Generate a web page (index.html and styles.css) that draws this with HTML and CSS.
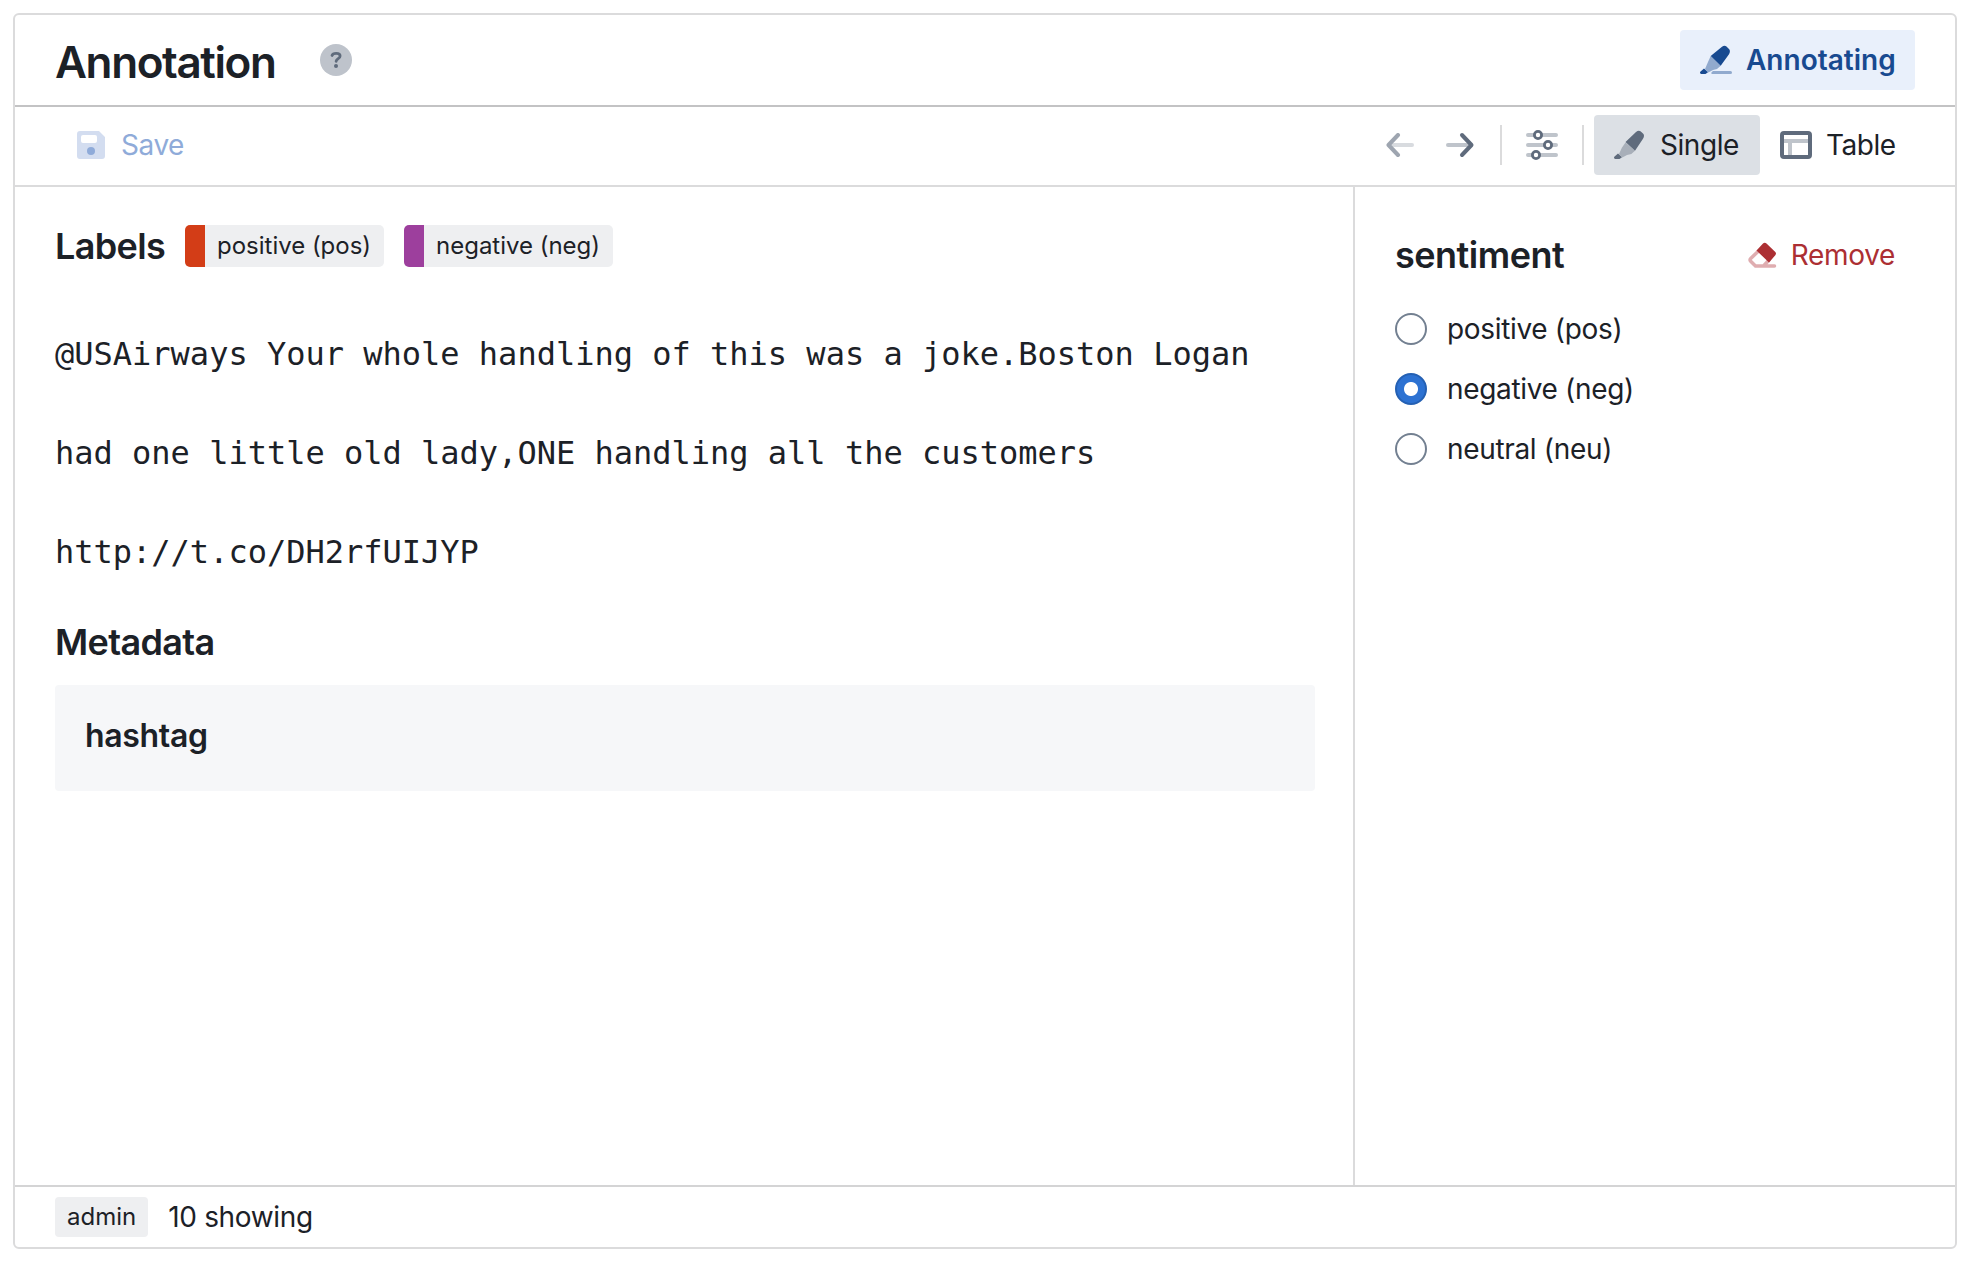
FILE: index.html
```html
<!DOCTYPE html>
<html lang="en">
<head>
<meta charset="utf-8">
<title>Annotation</title>
<link rel="stylesheet" href="styles.css">
</head>
<body>
<main class="widget">
  <header class="header">
    <h1 class="title">Annotation</h1>
    <span class="help"><svg viewBox="0 0 32 32" width="32" height="32"><circle cx="16" cy="16" r="16" fill="#bec3cb"/><path d="M12 11.500C12.500 9.800 14 9.300 16.200 9.300c2.500 0 3.900 1 3.900 2.800 0 2.500-3.600 2.600-4 5.200" fill="none" stroke="#5f6b7c" stroke-width="2.800" stroke-linecap="round"/><circle cx="16" cy="22" r="2" fill="#5f6b7c"/></svg></span>
    <button class="btn annotating"><svg viewBox="0 0 32 32" width="32" height="32"><path class="fade" d="M10.700 12l10 9.700-3.700 3.300-4 1-4.700 2.500L5 25l3-7z"/><path d="M10.700 12L22 2.700q2.500-2 4.500-.2l2.500 2.500q1.800 2 0 5.200L20.700 21.700zM4 24.500l4 3.800L5.500 30H1.200Q-.6 29.500.3 27.800z"/><path class="fade" d="M13 27h17.500a1.500 1.500 0 010 3H11.500q-1-1.500 1.500-3z"/></svg><span>Annotating</span></button>
  </header>
  <div class="toolbar">
    <button class="btn save"><svg viewBox="0 0 32 32" width="32" height="32"><path fill="#d3ddf0" fill-rule="evenodd" d="M5 2h19l6 6v19a3 3 0 01-3 3H5a3 3 0 01-3-3V5a3 3 0 013-3zm3 4a2 2 0 00-2 2v4a2 2 0 002 2h12a2 2 0 002-2V8a2 2 0 00-2-2z"/><circle cx="16" cy="22" r="4" fill="#8fabd9"/></svg><span>Save</span></button>
    <span class="spacer"></span>
    <svg class="arrow back" viewBox="0 0 32 32" width="32" height="32"><path d="M6 16h22" class="tail"/><path d="M14 6L4.500 16l9.500 10" class="head"/></svg>
    <svg class="arrow" viewBox="0 0 32 32" width="32" height="32"><path d="M4 16h22" class="tail"/><path d="M18 6l9.500 10L18 26" class="head"/></svg>
    <i class="divider"></i>
    <svg class="sliders" viewBox="0 0 32 32" width="32" height="32"><path d="M2 6h28M2 16h28M2 26h28" stroke="#bfc4cb" stroke-width="4" stroke-linecap="round"/><g fill="#fff" stroke="#5f6b7c" stroke-width="2.800"><circle cx="12" cy="6" r="3.600"/><circle cx="22" cy="16" r="3.600"/><circle cx="10" cy="26" r="3.600"/></g></svg>
    <i class="divider"></i>
    <button class="btn single"><svg viewBox="0 0 32 32" width="32" height="32"><path class="fade" d="M11.500 13.500l9.500 8.200-3.700 3.300-4.300 1-4.700 2.500L5 25l3-6.500z"/><path d="M11.500 13L22 3q2.500-2 4.500-.7l2.500 2.200q2 2 0 5.200L21 21.700zM4 24.500l4 3.800L5.500 30H1.200Q-.6 29.500.3 27.800z"/></svg><span>Single</span></button>
    <button class="btn table"><svg viewBox="0 0 32 32" width="32" height="32" fill="none"><path d="M2 12h28M10 12v16" stroke="#bfc4cb" stroke-width="4"/><rect x="2" y="4" width="28" height="24" rx="2" stroke="#5f6b7c" stroke-width="4"/></svg><span>Table</span></button>
  </div>
  <div class="body">
    <section class="document">
      <div class="labels">
        <h2>Labels</h2>
        <span class="tag pos">positive (pos)</span>
        <span class="tag neg">negative (neg)</span>
      </div>
      <p class="text">@USAirways Your whole handling of this was a joke.Boston Logan had one little old lady,ONE handling all the customers http://t.co/DH2rfUIJYP</p>
      <h2 class="meta-title">Metadata</h2>
      <div class="meta">hashtag</div>
    </section>
    <aside class="schema">
      <div class="schema-head">
        <h2>sentiment</h2>
        <button class="remove"><svg viewBox="0 0 32 32" width="32" height="32"><path d="M12 12.500l-7.300 7q-1.400 1.400 0 2.800L9.500 27h19M23 21l-5 5.500" fill="none" stroke="#dfadb0" stroke-width="3.500" stroke-linecap="round"/><path d="M17 4.500q1.800-1.600 3.500 0l8.800 8.500q1.400 1.600 0 3.200L23 23.500 10.500 11.500z" fill="#ac2f33"/></svg><span>Remove</span></button>
      </div>
      <label class="choice"><input type="radio" name="s"><span>positive (pos)</span></label>
      <label class="choice"><input type="radio" name="s" checked><span>negative (neg)</span></label>
      <label class="choice"><input type="radio" name="s"><span>neutral (neu)</span></label>
    </aside>
  </div>
  <footer class="footer"><span class="user">admin</span><span>10 showing</span></footer>
</main>
</body>
</html>
```
FILE: styles.css
```css
* { box-sizing: border-box; }
body { margin: 0; background: #fff; color: #1c2127; font: 28px/36px Inter, sans-serif; letter-spacing: -0.33px; }
h1, h2, p { margin: 0; }
svg { display: block; flex: none; }
button { border: 0; background: none; padding: 0; font: inherit; color: inherit; letter-spacing: inherit; }
.widget { display: flex; flex-direction: column; width: 1944px; height: 1236px; margin: 13px 0 0 13px; border: 2px solid #dbdbdc; border-radius: 6px; }
.header { display: flex; align-items: center; height: 92px; padding: 0 40px; border-bottom: 2px solid #c3c3c4; }
.title { width: 220px; padding-top: 3px; font-size: 44px; line-height: 56px; font-weight: 600; letter-spacing: -1.4px; white-space: nowrap; }
.help { margin-left: 45px; }
.btn { display: flex; align-items: center; height: 60px; padding: 0 20px; gap: 14px; border-radius: 4px; white-space: nowrap; }
.annotating { width: 235px; margin-left: auto; background: #e9f0fb; color: #184a90; fill: #184a90; font-weight: 600; letter-spacing: 0; }
.fade { opacity: .42; }
.toolbar { display: flex; align-items: center; height: 80px; padding: 0 40px 2px; border-bottom: 2px solid #dbdbdc; letter-spacing: -0.45px; }
.save { color: #8fabd9; }
.spacer { flex: 1; }
.arrow { fill: none; stroke: #5f6b7c; stroke-width: 4; stroke-linecap: round; stroke-linejoin: round; margin-right: 24px; }
.tail { opacity: .4; }
.back { margin-right: 28px; opacity: .6; }
.divider { width: 2px; height: 40px; background: #dbdbdc; }
.sliders { margin: 0 24px; }
.single { width: 166px; margin-left: 10px; background: #dce0e5; fill: #5f6b7c; }
.table { width: 155px; }
.body { display: flex; flex: 1; }
.document { width: 1340px; padding: 38px 38px 0 40px; border-right: 2px solid #dbdbdc; }
h2 { font-size: 36px; line-height: 42px; font-weight: 600; letter-spacing: -0.65px; }
.labels { display: flex; align-items: center; gap: 20px; }
.tag { height: 42px; padding: 0 13px 0 12px; border-left: 20px solid; border-radius: 5px; background: #eeeff1; font-size: 24px; line-height: 42px; letter-spacing: -0.02px; }
.pos { border-color: #d33d17; }
.neg { border-color: #9d3f9d; }
.text { margin-top: 38px; font: 32px/99px "DejaVu Sans Mono", monospace; letter-spacing: 0; }
.meta-title { margin-top: 19px; }
.meta { margin-top: 22px; height: 106px; padding: 30px; border-radius: 4px; background: #f6f7f9; font-size: 32px; line-height: 42px; font-weight: 600; }
.schema { flex: 1; padding: 50px 60px 0 40px; }
.schema-head { display: flex; justify-content: space-between; align-items: center; height: 36px; margin-bottom: 40px; }
.schema-head h2 { letter-spacing: -0.5px; }
.remove { display: flex; align-items: center; gap: 13px; color: #ac2f33; }
.choice { display: flex; align-items: center; gap: 20px; height: 32px; margin-bottom: 28px; }
.choice input { appearance: none; width: 32px; height: 32px; margin: 0; border: 2px solid #738091; border-radius: 50%; }
.choice input:checked { border-color: #2460b3; background: radial-gradient(circle, #fff 0 6.500px, #2d72d2 7.500px); }
.footer { display: flex; align-items: center; gap: 20px; height: 62px; padding: 0 40px; border-top: 2px solid #d4d4d5; }
.user { height: 40px; padding: 0 12px; border-radius: 4px; background: #eeeff1; font-size: 24px; line-height: 40px; letter-spacing: 0; }
```
